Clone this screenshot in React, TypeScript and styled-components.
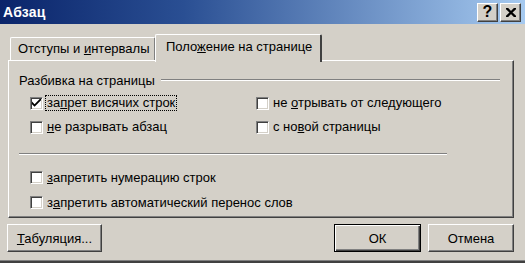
import React from "react";
import styled, {createGlobalStyle} from "styled-components";

const GlobalStyle = createGlobalStyle`
    html, body {
        margin: 0;
        padding: 0;
        background: #d4d0c8;
    }
    body {
        font-family: "Liberation Sans", Arial, sans-serif;
        font-size: 13px;
        color: #000;
    }
`;

const Window = styled.div`
    width: 525px;
    height: 263px;
    box-sizing: border-box;
    background: #d4d0c8;
    border-bottom: 2px solid #404040;
    box-shadow: inset 0 -1px 0 #808080;
    display: flex;
    flex-direction: column;
    overflow: hidden;
`;

const TitleBar = styled.div`
    height: 24px;
    flex: none;
    display: flex;
    align-items: center;
    justify-content: space-between;
    padding: 0 4px 0 3px;
    background: linear-gradient(to right, #0a246a 0%, #2a4f93 35%, #a6caf0 100%);
`;

const Title = styled.span`
    color: #fff;
    font-weight: bold;
    font-size: 14px;
    letter-spacing: 0.2px;
`;

const CaptionButtons = styled.div`
    display: flex;
    gap: 2px;
`;

const CaptionButton = styled.div`
    width: 21px;
    height: 19px;
    box-sizing: border-box;
    background: #d4d0c8;
    border-top: 1px solid #fff;
    border-left: 1px solid #fff;
    border-right: 1px solid #404040;
    border-bottom: 1px solid #404040;
    box-shadow: inset -1px -1px 0 #808080;
    display: flex;
    align-items: center;
    justify-content: center;
    font-weight: bold;
    font-size: 16px;
    line-height: 1;
`;

const Body = styled.div`
    display: flex;
    flex-direction: column;
    padding: 10px 11px 0 8px;
`;

const TabStrip = styled.div`
    display: flex;
    align-items: flex-end;
    height: 26px;
    padding-left: 2px;
    position: relative;
    z-index: 1;
`;

const Tab = styled.div<{ $active?: boolean }>`
    box-sizing: border-box;
    height: ${p => (p.$active ? 28 : 23)}px;
    margin-bottom: ${p => (p.$active ? -2 : 0)}px;
    margin-left: ${p => (p.$active ? -1 : 0)}px;
    padding: ${p => (p.$active ? "4px 10px 0 10px" : "3px 8px 0 7px")};
    width: ${p => (p.$active ? 167 : 146)}px;
    background: #d4d0c8;
    border-top: 1px solid #fff;
    border-left: 1px solid #fff;
    border-right: 2px solid ${p => (p.$active ? "#404040" : "#808080")};
    border-top-left-radius: 2px;
    border-top-right-radius: 2px;
    white-space: nowrap;
    line-height: 16px;
`;

const TabPanel = styled.div`
    height: 158px;
    box-sizing: border-box;
    border-top: 1px solid #fff;
    border-left: 1px solid #fff;
    border-right: 1px solid #404040;
    border-bottom: 1px solid #404040;
    box-shadow: inset -1px -1px 0 #808080;
    padding: 11px 13px 0 10px;
    display: flex;
    flex-direction: column;
`;

const GroupHeader = styled.div`
    display: flex;
    align-items: center;
    height: 16px;
`;

const GroupLine = styled.div`
    flex: 1;
    margin-left: 6px;
    border-top: 1px solid #808080;
    border-bottom: 1px solid #fff;
`;

const CheckGrid = styled.div`
    display: grid;
    grid-template-columns: 226px 1fr;
    grid-auto-rows: 24px;
    margin: 3px 0 0 11px;
`;

const CheckList = styled.div`
    display: flex;
    flex-direction: column;
    margin: 10px 0 0 11px;
`;

const CheckRow = styled.label<{ $height?: number }>`
    display: flex;
    align-items: center;
    height: ${p => p.$height ?? 24}px;
    white-space: nowrap;
`;

const Box = styled.span`
    width: 13px;
    height: 13px;
    box-sizing: border-box;
    flex: none;
    background: #fff;
    border-top: 1px solid #808080;
    border-left: 1px solid #808080;
    border-right: 1px solid #fff;
    border-bottom: 1px solid #fff;
    box-shadow: inset 1px 1px 0 #404040, inset -1px -1px 0 #d4d0c8;
    display: flex;
    align-items: center;
    justify-content: center;
    margin-right: 3px;
`;

const Caption = styled.span<{ $focused?: boolean }>`
    padding: 0 1px;
    line-height: 14px;
    outline: ${p => (p.$focused ? "1px dotted #000" : "none")};
`;

const Separator = styled.div`
    width: 428px;
    margin-top: 14px;
    border-top: 1px solid #808080;
    border-bottom: 1px solid #fff;
`;

const ButtonRow = styled.div`
    display: flex;
    align-items: center;
    margin: 6px 0 0 -1px;
`;

const Spacer = styled.div`
    flex: 1;
`;

const PushButton = styled.div<{ $width: number; $default?: boolean }>`
    width: ${p => p.$width}px;
    height: 28px;
    box-sizing: border-box;
    margin-left: 7px;
    display: flex;
    align-items: center;
    justify-content: center;
    background: #d4d0c8;
    border-top: 1px solid ${p => (p.$default ? "#000" : "#fff")};
    border-left: 1px solid ${p => (p.$default ? "#000" : "#fff")};
    border-right: 1px solid ${p => (p.$default ? "#000" : "#404040")};
    border-bottom: 1px solid ${p => (p.$default ? "#000" : "#404040")};
    box-shadow: ${p => (p.$default
        ? "inset 1px 1px 0 #fff, inset -1px -1px 0 #404040, inset -2px -2px 0 #808080"
        : "inset -1px -1px 0 #808080")};
    &:first-child {
        margin-left: 0;
    }
`;

const Check = () => (
    <svg width="9" height="9" viewBox="0 0 7 7">
        <path d="M0 2 L0 4 L2 6 L7 1 L7 -1 L2 4 Z" fill="#000"/>
    </svg>
);

type Item = { text: React.ReactNode; checked?: boolean; focused?: boolean; height?: number };

const CheckItem = ({text, checked, focused, height}: Item) => (
    <CheckRow $height={height}>
        <Box>{checked && <Check/>}</Box>
        <Caption $focused={focused}>{text}</Caption>
    </CheckRow>
);

export default function App() {
    return (
        <>
            <GlobalStyle/>
            <Window>
                <TitleBar>
                    <Title>Абзац</Title>
                    <CaptionButtons>
                        <CaptionButton>?</CaptionButton>
                        <CaptionButton>
                            <svg width="10" height="9" viewBox="0 0 10 9">
                                <path d="M1 0 L5 4 L9 0 M1 9 L5 5 L9 9 M0 0 L4.5 4.5 L0 9 M10 0 L5.5 4.5 L10 9"
                                      stroke="#000" strokeWidth="1.6" fill="none"/>
                            </svg>
                        </CaptionButton>
                    </CaptionButtons>
                </TitleBar>
                <Body>
                    <TabStrip>
                        <Tab>Отступы и <u>и</u>нтервалы</Tab>
                        <Tab $active>Поло<u>ж</u>ение на странице</Tab>
                    </TabStrip>
                    <TabPanel>
                        <GroupHeader>
                            Разбивка на страницы
                            <GroupLine/>
                        </GroupHeader>
                        <CheckGrid>
                            <CheckItem text={<>за<u>п</u>рет висячих строк</>} checked focused/>
                            <CheckItem text={<>не <u>о</u>трывать от следующего</>}/>
                            <CheckItem text={<><u>н</u>е разрывать абзац</>}/>
                            <CheckItem text={<>с но<u>в</u>ой страницы</>}/>
                        </CheckGrid>
                        <Separator/>
                        <CheckList>
                            <CheckItem height={25} text={<><u>з</u>апретить нумерацию строк</>}/>
                            <CheckItem height={25} text={<>з<u>а</u>претить автоматический перенос слов</>}/>
                        </CheckList>
                    </TabPanel>
                    <ButtonRow>
                        <PushButton $width={95}><span><u>Т</u>абуляция...</span></PushButton>
                        <Spacer/>
                        <PushButton $width={87} $default>ОК</PushButton>
                        <PushButton $width={86}>Отмена</PushButton>
                    </ButtonRow>
                </Body>
            </Window>
        </>
    );
}
